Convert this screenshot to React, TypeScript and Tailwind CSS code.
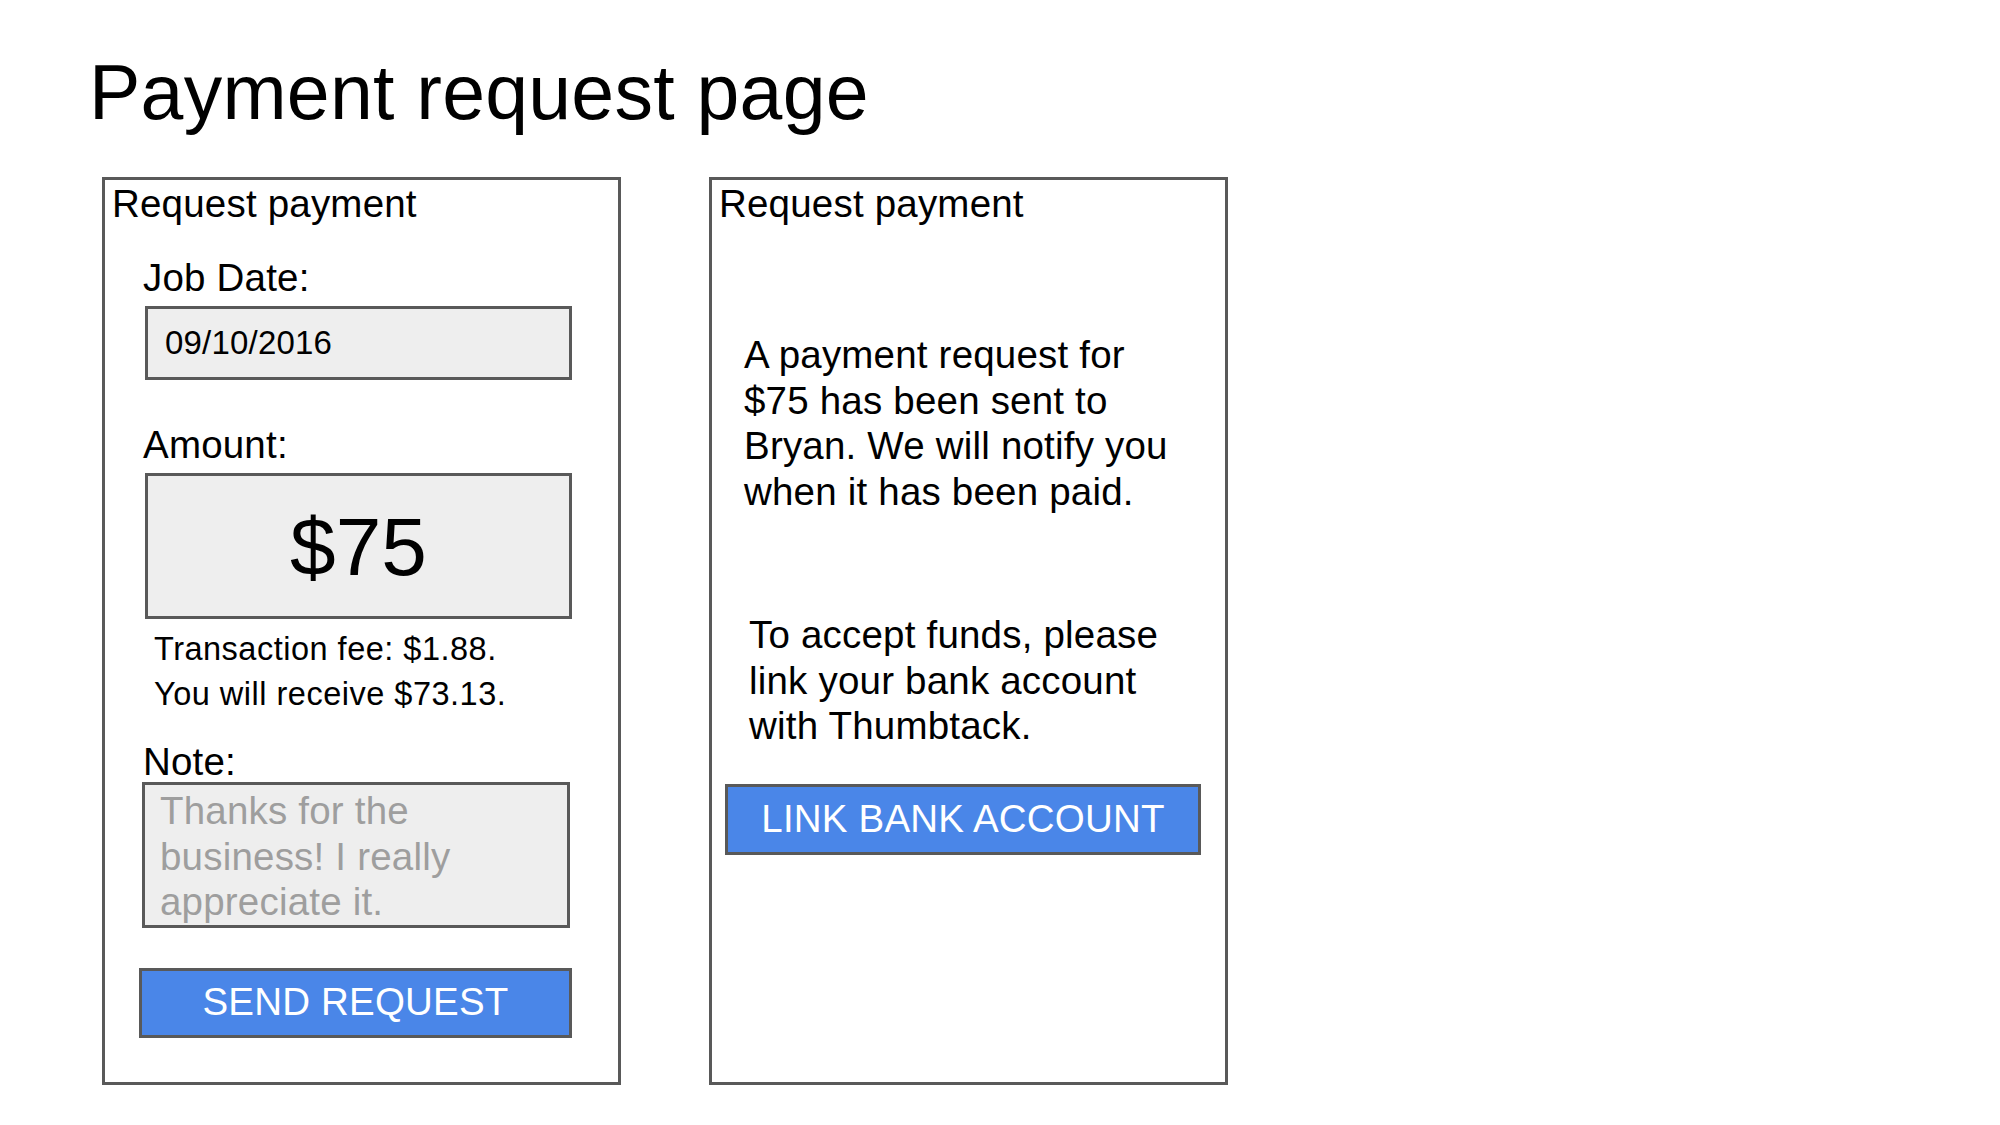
const font = { fontFamily: '"Liberation Sans", Arial, sans-serif' };

const RequestForm = () => (
  <div className="w-[519px] h-[908px] border-[3px] border-[#595959] flex flex-col tracking-[0.2px]">
    <div className="mt-[2px] ml-[7px] text-[38.5px] leading-[44px]">Request payment</div>

    <div className="mt-[30px] ml-[38px] text-[38.5px] leading-[44px]">Job Date:</div>
    <div className="mt-[6px] ml-[40px] w-[427px] h-[74px] border-[3px] border-[#595959] bg-[#eeeeee] flex items-center pl-[17px] text-[33px]">
      09/10/2016
    </div>

    <div className="mt-[43px] ml-[38px] text-[38.5px] leading-[44px]">Amount:</div>
    <div className="mt-[6px] ml-[40px] w-[427px] h-[146px] border-[3px] border-[#595959] bg-[#eeeeee] flex items-center justify-center text-[82px] tracking-normal">
      $75
    </div>

    <div className="mt-[8px] ml-[49px] text-[32.5px] leading-[45px] tracking-[0.5px]">
      Transaction fee: $1.88.
      <br />
      You will receive $73.13.
    </div>

    <div className="mt-[24px] ml-[38px] text-[38.5px] leading-[41px]">Note:</div>
    <div className="ml-[37px] w-[428px] border-[3px] border-[#595959] bg-[#eeeeee] pl-[15px] pt-[3px] text-[38.5px] leading-[45.5px] text-[#9e9e9e]">
      Thanks for the
      <br />
      business! I really
      <br />
      appreciate it.
    </div>

    <button className="mt-[40px] ml-[34px] w-[433px] h-[70px] border-[3px] border-[#595959] bg-[#4a86e8] text-white text-[38.5px] leading-none">
      SEND REQUEST
    </button>
  </div>
);

const RequestSent = () => (
  <div className="w-[519px] h-[908px] border-[3px] border-[#595959] flex flex-col tracking-[0.2px]">
    <div className="mt-[2px] ml-[7px] text-[38.5px] leading-[44px]">Request payment</div>

    <p className="mt-[106px] ml-[32px] text-[38.5px] leading-[45.5px]">
      A payment request for
      <br />
      $75 has been sent to
      <br />
      Bryan. We will notify you
      <br />
      when it has been paid.
    </p>

    <p className="mt-[98px] ml-[37px] text-[38.5px] leading-[45.5px]">
      To accept funds, please
      <br />
      link your bank account
      <br />
      with Thumbtack.
    </p>

    <button className="mt-[35px] ml-[13px] w-[476px] h-[71px] border-[3px] border-[#595959] bg-[#4a86e8] text-white text-[38.5px] leading-none">
      LINK BANK ACCOUNT
    </button>
  </div>
);

export default function App() {
  return (
    <div className="w-[2000px] h-[1125px] bg-white text-black pl-[89px] pt-[54px]" style={font}>
      <h1 className="text-[77px] leading-none tracking-[0.25px]">Payment request page</h1>
      <div className="mt-[46px] ml-[13px] flex gap-[88px]">
        <RequestForm />
        <RequestSent />
      </div>
    </div>
  );
}
